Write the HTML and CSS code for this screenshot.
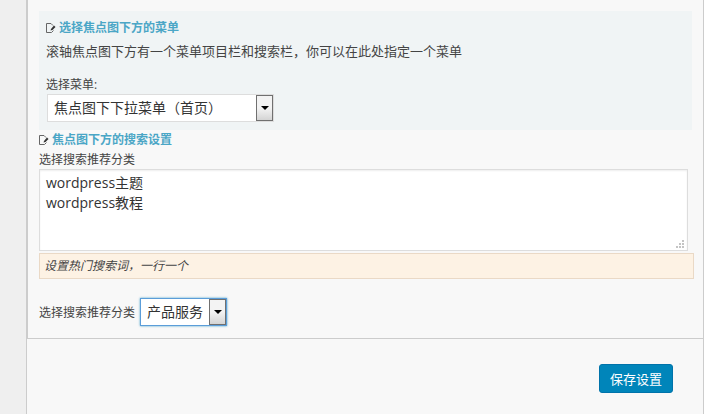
FILE: index.html
```html
<!DOCTYPE html>
<html lang="zh-CN">
<head>
<meta charset="utf-8">
<title>主题设置</title>
<link rel="stylesheet" href="styles.css">
</head>
<body>
<form class="page">
  <div class="settings">
    <section class="group group-tinted">
      <h2 class="title">
        <svg class="icon" viewBox="0 0 10 10" aria-hidden="true"><path d="M5 .5H.5v9h5l2-2M5 .5l2 2" fill="none" stroke="#666"/><path d="M4.5 7.5L5 6l3-3.500 1.500 1.500-3 3z" fill="#333"/></svg>
        选择焦点图下方的菜单
      </h2>
      <p class="desc">滚轴焦点图下方有一个菜单项目栏和搜索栏，你可以在此处指定一个菜单</p>
      <label class="label" for="menu">选择菜单:</label>
      <div class="select select-wide">
        <select id="menu"><option>焦点图下下拉菜单（首页）</option></select>
      </div>
    </section>
    <section class="group">
      <h2 class="title">
        <svg class="icon" viewBox="0 0 10 10" aria-hidden="true"><path d="M5 .5H.5v9h5l2-2M5 .5l2 2" fill="none" stroke="#666"/><path d="M4.5 7.5L5 6l3-3.500 1.500 1.500-3 3z" fill="#333"/></svg>
        焦点图下方的搜索设置
      </h2>
      <label class="label" for="words">选择搜索推荐分类</label>
      <div class="area">
        <textarea id="words">wordpress主题
wordpress教程</textarea>
        <svg class="grip" viewBox="0 0 8 8" aria-hidden="true"><path d="M6 0h2v2h-2zM3 3h2v2h-2zM6 3h2v2h-2zM0 6h2v2h-2zM3 6h2v2h-2zM6 6h2v2h-2z" fill="#c4c4c4"/></svg>
      </div>
      <p class="hint">设置热门搜索词，一行一个</p>
      <div class="row">
        <label class="label" for="category">选择搜索推荐分类</label>
        <div class="select select-active">
          <select id="category"><option>产品服务</option></select>
        </div>
      </div>
    </section>
  </div>
  <div class="footer"><button class="save" type="submit">保存设置</button></div>
</form>
</body>
</html>
```
FILE: styles.css
```css
* { box-sizing: border-box; }

body {
  margin: 0;
  background: #efefef;
  color: #444;
  font: 12px/20px "Open Sans", "Noto Sans CJK SC", sans-serif;
}

.page {
  display: flex;
  flex-direction: column;
  min-height: 100vh;
  margin-left: 26px;
  background: #f8f8f8;
  border-right: 1px solid #ccc;
}

.settings {
  padding: 11px 9px 12px 11px;
  border-left: 2px solid #ccc;
  border-bottom: 1px solid #ccc;
}

.group-tinted {
  margin-right: 2px;
  padding: 7px 7px 8px;
  background: #f0f4f5;
}

.title {
  display: flex;
  align-items: center;
  gap: 3px;
  margin: 0;
  color: #4ba6c6;
  font-size: 12px;
  line-height: 20px;
}

.icon {
  width: 10px;
  height: 10px;
}

.desc {
  margin: 3px 0 14px;
  font-size: 13px;
}

.label {
  display: block;
  line-height: 19px;
}

.select {
  position: relative;
  width: 87px;
  height: 28px;
  background: #fff;
  border: 1px solid #ddd;
}

.select-wide {
  width: 227px;
  margin-left: 1px;
}

.select select {
  width: 100%;
  height: 100%;
  padding: 0 18px 0 6px;
  appearance: none;
  background: none;
  border: 0;
  outline: 0;
  color: #333;
  font: inherit;
  font-size: 14px;
}

.select::before {
  content: "";
  position: absolute;
  top: 0;
  right: 0;
  bottom: 0;
  width: 15px;
  background: linear-gradient(#f3f3f3 50%, #d4d4d4);
  border: 1px solid #707070;
  pointer-events: none;
}

.select::after {
  content: "";
  position: absolute;
  top: 11px;
  right: 4px;
  border: 4px solid transparent;
  border-top-color: #000;
  border-bottom: 0;
  pointer-events: none;
}

.select-active {
  border-color: #5b9dd9;
  box-shadow: 0 0 2px rgba(30, 140, 190, .8);
}

.area {
  position: relative;
  margin-right: 6px;
}

textarea {
  display: block;
  width: 100%;
  height: 82px;
  padding: 3px 6px;
  resize: none;
  border: 1px solid #ddd;
  box-shadow: inset 0 1px 2px rgba(0, 0, 0, .07);
  color: #333;
  font: inherit;
  font-size: 14px;
}

.grip {
  position: absolute;
  right: 4px;
  bottom: 3px;
  width: 8px;
  height: 8px;
}

.hint {
  margin: 2px 0 19px;
  padding: 2px 4px;
  background: #fdf2e4;
  border: 1px solid #ead9c6;
  font-style: italic;
}

.row {
  display: flex;
  align-items: center;
  gap: 5px;
}

.footer {
  display: flex;
  flex: 1;
  justify-content: flex-end;
  align-items: flex-start;
  padding: 25px 30px 20px;
  border-left: 1px solid #ccc;
}

.save {
  height: 29px;
  padding: 0 10px;
  background: #0085ba;
  border: 1px solid #0073aa;
  border-radius: 3px;
  color: #fff;
  font: inherit;
  font-size: 13px;
}
```
